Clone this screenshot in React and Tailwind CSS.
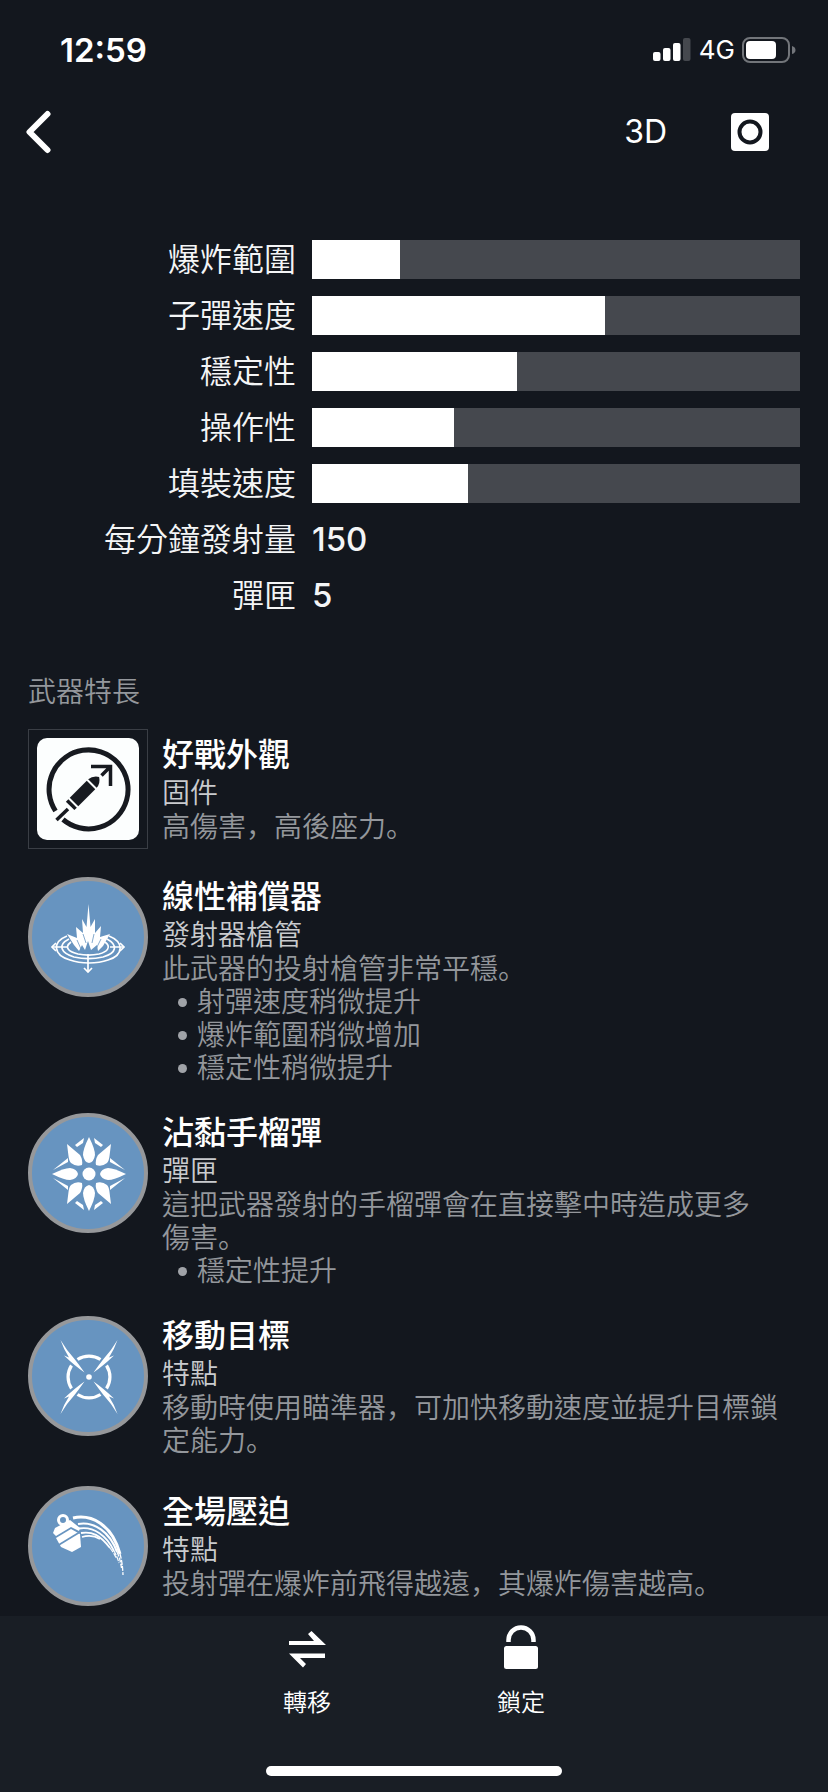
import React from "react";

const FONT = "font-['Inter','Noto_Sans_CJK_TC',sans-serif]";

const STATS = [
  { label: "爆炸範圍", value: 18 },
  { label: "子彈速度", value: 60 },
  { label: "穩定性", value: 42 },
  { label: "操作性", value: 29 },
  { label: "填裝速度", value: 32 },
];

const NUMBERS = [
  { label: "每分鐘發射量", value: "150" },
  { label: "彈匣", value: "5" },
];

function SignalIcon() {
  return (
    <svg className="h-6 w-10" viewBox="0 0 40 24" aria-hidden="true">
      <rect x="1" y="14" width="7.500" height="9" rx="2" fill="#fff" />
      <rect x="11" y="10" width="7.500" height="13" rx="2" fill="#fff" />
      <rect x="21" y="5" width="7.500" height="18" rx="2" fill="#fff" />
      <rect x="31" y="0" width="7.500" height="23" rx="2" fill="#45484e" />
    </svg>
  );
}

function BatteryIcon() {
  return (
    <svg className="h-[26px] w-[54px]" viewBox="0 0 54 26" aria-hidden="true">
      <rect x="1" y="1" width="46" height="24" rx="7" fill="none" stroke="#72757a" strokeWidth="2" />
      <rect x="4" y="4" width="30" height="18" rx="4" fill="#fff" />
      <path d="M50 9 Q53.5 10 53.5 13 T50 17 Z" fill="#72757a" />
    </svg>
  );
}

function FrameArt() {
  return (
    <svg className="block size-full" viewBox="0 0 120 120" aria-hidden="true">
      <rect x="0.5" y="0.5" width="119" height="119" fill="none" stroke="#3a3e45" />
      <rect x="9" y="9" width="102" height="102" rx="10" fill="#fcfefe" />
      <g stroke="#171a20" fill="none">
        <path d="M27.500 82 A39.500 39.500 0 1 1 35 90.500" strokeWidth="5" />
        <path d="M28.500 91 L40 80" strokeWidth="3.500" />
        <path d="M63 37.500 H82.500 V57 M82 38 L73.500 46.500" strokeWidth="3.500" />
      </g>
      <g transform="translate(54.500 64.500) rotate(45)" fill="#171a20">
        <path d="M-6 -12 H6 V12 H-6 Z" />
        <path d="M-6 -14 Q-5.500 -20 0 -23.500 Q5.500 -20 6 -14 Z" />
        <rect x="-6" y="14" width="12" height="3.500" />
      </g>
    </svg>
  );
}

function CompensatorArt() {
  return (
    <>
      <g fill="none" stroke="#fff" strokeWidth="1.700">
        <path d="M39 59 C24 65 25 78 42 83 C53 87 69 87 80 83 C96 78 96 65 81 59" />
        <path d="M41 62 C29 68 33 76 46 80 C55 82 66 82 75 80 C89 76 90 68 79 62" />
        <path d="M43 65 C35 71 42 75 50 77 C57 78.500 64 78.500 71 77 C79 75 84 70 77 65" />
        <path d="M24 70 H39 M82 70 H96 M60 77 V94" />
        <path d="M28 66 L24 70 L28 74 M92 66 L96 70 L92 74 M56 91 L60 95 L64 91" />
      </g>
      <path
        fill="#fff"
        d="M60.500 27 L62.500 50 L67 42 L67 56 L73 49 L72 60 L82 57 L75 69 L70 74 L69 68 L63 73 L60 64 L57 73 L54 68 L51 74 L46 68 L39 57 L49 61 L48 50 L55 56 L54 42 L58.500 50 Z"
      />
      <g stroke="#6794c0" strokeWidth="0.800" fill="none">
        <path d="M55 57 L58 66 M66 57 L64 66 M49 63 L53 72 M73 62 L68 72" />
      </g>
    </>
  );
}

function GrenadeArt() {
  return (
    <g transform="translate(61 61)" fill="#fff">
      <circle r="6.500" />
      {[0, 90, 180, 270].map((a) => (
        <path key={a} transform={`rotate(${a})`} d="M0 -37 Q6 -25 6 -19 Q5 -12 0 -11 Q-5 -12 -6 -19 Q-6 -25 0 -37 Z" />
      ))}
      {["1 1", "-1 1", "1 -1", "-1 -1"].map((s) => (
        <g key={s} transform={`scale(${s})`}>
          <path d="M-22 -30 L-9 -19 Q-6 -14 -7 -9 Q-13 -7 -18 -11 Q-20 -13 -20.500 -18 Z" />
          <path d="M-5 -36 L-14 -29 L-12 -27 L-6 -31 Z" />
          <path d="M-36 -4 L-21 -16 L-21 -12 Z" />
        </g>
      ))}
    </g>
  );
}

function TargetArt() {
  return (
    <g transform="translate(61 61)" fill="#fff">
      <circle r="2.800" />
      {[0, 90, 180, 270].map((a) => (
        <path key={a} transform={`rotate(${a})`} d="M-11.500 -17.500 A21 21 0 0 1 11.500 -17.500" fill="none" stroke="#fff" strokeWidth="3.200" />
      ))}
      {["1 1", "-1 1", "1 -1", "-1 -1"].map((s) => (
        <path key={s} transform={`scale(${s})`} d="M4.500 -4.500 Q14 -11 25 -21.500 L20 -19.500 Q25 -27 28.500 -37 Q22 -26 14.500 -18 Q9 -11 4.500 -4.500 Z" />
      ))}
    </g>
  );
}

function LaunchArt() {
  return (
    <>
      <g fill="none" stroke="#fff">
        <path d="M45 32 C63 28 84 38 92 68" strokeWidth="3" />
        <path d="M50 38 C66 35 82 46 89 66" strokeWidth="2.200" />
        <path d="M51 42.500 C66 40 79 50 86 65" strokeWidth="1.800" />
        <path d="M53 47 C64 45 72 49 82 62" strokeWidth="1.800" />
        <path d="M54 51 C61 49 67 50 72 53" strokeWidth="1.800" />
        <path d="M92 68 Q94.500 76 95 89 M89 66 Q92 72 93.500 82" strokeWidth="1.300" strokeDasharray="5 1.200" />
        <path d="M86 65 Q89 70 91 77 M82 62 Q86 67 88 72" strokeWidth="1.200" strokeDasharray="5 1.200" />
      </g>
      <circle cx="35" cy="34" r="4.500" fill="none" stroke="#fff" strokeWidth="3" />
      <path fill="#fff" d="M27 42 L42 34 L52 42 L51 45 L43 41 L28 50 L25 47 Z" />
      <path fill="#fff" d="M28 52 L43 43 L52 48 L53 61 L44 66 L33 61 Z" />
      <path d="M29 60 L52 46" stroke="#6794c0" strokeWidth="1.700" />
    </>
  );
}

function PerkIcon({ art: Art }) {
  return (
    <svg className="block size-full" viewBox="0 0 120 120" aria-hidden="true">
      <circle cx="60" cy="60" r="58" fill="#6794c0" stroke="#96989b" strokeWidth="4" />
      <Art />
    </svg>
  );
}

// Corner-set commas and full stops come from the Japanese cut of the typeface.
function Mark({ children }) {
  return (
    <span lang="ja" className="font-['Inter','Noto_Sans_CJK_JP',sans-serif]">
      {children}
    </span>
  );
}

const PERKS = [
  {
    name: "好戰外觀",
    type: "固件",
    icon: <FrameArt />,
    text: (
      <>
        高傷害<Mark>，</Mark>高後座力<Mark>。</Mark>
      </>
    ),
    bullets: [],
  },
  {
    name: "線性補償器",
    type: "發射器槍管",
    icon: <PerkIcon art={CompensatorArt} />,
    text: (
      <>
        此武器的投射槍管非常平穩<Mark>。</Mark>
      </>
    ),
    bullets: ["射彈速度稍微提升", "爆炸範圍稍微增加", "穩定性稍微提升"],
  },
  {
    name: "沾黏手榴彈",
    type: "彈匣",
    icon: <PerkIcon art={GrenadeArt} />,
    text: (
      <>
        這把武器發射的手榴彈會在直接擊中時造成更多
        <span className="whitespace-nowrap">
          傷害<Mark>。</Mark>
        </span>
      </>
    ),
    bullets: ["穩定性提升"],
  },
  {
    name: "移動目標",
    type: "特點",
    icon: <PerkIcon art={TargetArt} />,
    text: (
      <>
        移動時使用瞄準器<Mark>，</Mark>可加快移動速度並提升目標鎖定能力<Mark>。</Mark>
      </>
    ),
    bullets: [],
  },
  {
    name: "全場壓迫",
    type: "特點",
    icon: <PerkIcon art={LaunchArt} />,
    text: (
      <>
        投射彈在爆炸前飛得越遠<Mark>，</Mark>其爆炸傷害越高<Mark>。</Mark>
      </>
    ),
    bullets: [],
  },
];

function StatRow({ label, children }) {
  return (
    <div className="flex items-center gap-4">
      <dt className="w-[268px] shrink-0 text-right text-[32px] leading-[39px] font-[350] text-[#f4f5f6]">{label}</dt>
      <dd className="flex-1">{children}</dd>
    </div>
  );
}

function Perk({ name, type, icon, text, bullets }) {
  return (
    <li className="flex items-start gap-[14px]">
      <div className="size-[120px] shrink-0">{icon}</div>
      <div className="flex min-h-[120px] flex-1 flex-col justify-center">
        <h3 className="text-[32px] leading-10 font-medium text-white">{name}</h3>
        <p className="text-[28px] leading-9 font-[350] text-[#c9cbce]">{type}</p>
        <div className="text-[28px] leading-[33px] font-[350] text-[#94979c]">
          <p>{text}</p>
          {bullets.length > 0 && (
            <ul className="pl-4">
              {bullets.map((b) => (
                <li key={b} className="flex items-center gap-[10px]">
                  <span className="size-[9px] rounded-full bg-[#a0a3a8]" />
                  {b}
                </li>
              ))}
            </ul>
          )}
        </div>
      </div>
    </li>
  );
}

function Action({ label, children }) {
  return (
    <button type="button" className="flex w-[214px] flex-col items-center gap-[17px] text-2xl leading-8 font-[350] text-white">
      {children}
      {label}
    </button>
  );
}

export default function App() {
  return (
    <div lang="zh-Hant" className={`flex min-h-screen flex-col bg-[#13171e] text-white ${FONT}`}>
      <div className="flex h-[88px] items-center justify-between pt-3 pr-8 pl-[60px]">
        <time className="text-[33px] leading-10 font-semibold">12:59</time>
        <div className="flex items-center gap-[7px]">
          <SignalIcon />
          <span className="text-[26px] leading-8">4G</span>
          <BatteryIcon />
        </div>
      </div>

      <header className="flex h-[88px] items-center justify-between pr-[59px] pl-6">
        <button type="button" aria-label="返回">
          <svg className="h-11 w-7" viewBox="0 0 28 44" fill="none" aria-hidden="true">
            <path d="M23.500 4 L5.500 22 L23.500 40" stroke="#fff" strokeWidth="6" strokeLinecap="round" strokeLinejoin="round" />
          </svg>
        </button>
        <div className="flex items-center gap-16">
          <button type="button" className="text-[32px] leading-10 font-normal">3D</button>
          <button type="button" aria-label="截圖">
            <svg className="size-[38px]" viewBox="0 0 38 38" aria-hidden="true">
              <rect width="38" height="38" rx="4" fill="#fff" />
              <circle cx="19" cy="19" r="10.500" fill="none" stroke="#13171e" strokeWidth="4" />
            </svg>
          </button>
        </div>
      </header>

      <main className="flex-1 px-7 pt-16 pb-[9px]">
        <dl className="flex flex-col gap-[17px]">
          {STATS.map((s) => (
            <StatRow key={s.label} label={s.label}>
              <div className="h-[39px] bg-[#45484e]">
                <div className="h-full bg-white" style={{ width: `${s.value}%` }} />
              </div>
            </StatRow>
          ))}
          {NUMBERS.map((n) => (
            <StatRow key={n.label} label={n.label}>
              <span className="block text-[33px] leading-[39px] font-medium text-[#f4f5f6]">{n.value}</span>
            </StatRow>
          ))}
        </dl>

        <h2 className="mt-[59px] text-[28px] leading-9 font-[350] text-[#94979c]">武器特長</h2>
        <ul className="mt-[19px] flex flex-col gap-7">
          {PERKS.map((p) => (
            <Perk key={p.name} {...p} />
          ))}
        </ul>
      </main>

      <footer className="sticky bottom-0 flex flex-col items-center bg-[#191e25] pt-2 pb-4">
        <nav className="flex justify-center">
          <Action label="轉移">
            <svg className="h-[46px] w-10" viewBox="0 0 40 46" fill="#fff" aria-hidden="true">
              <path d="M2 17 H27 L21 10 L24.500 7 L39 21 H2 Z" />
              <path d="M38 34 H13 L19 40 L16 43.500 L2 29.500 H38 Z" />
            </svg>
          </Action>
          <Action label="鎖定">
            <svg className="h-[46px] w-10" viewBox="0 0 40 46" aria-hidden="true">
              <path d="M7.500 18 V16 A12.500 12.500 0 0 1 32.500 16 V18" fill="none" stroke="#fff" strokeWidth="4.500" />
              <rect x="3" y="22" width="34" height="23" rx="2.500" fill="#fff" />
            </svg>
          </Action>
        </nav>
        <div className="mt-[47px] h-[10px] w-[296px] rounded-full bg-white" />
      </footer>
    </div>
  );
}
